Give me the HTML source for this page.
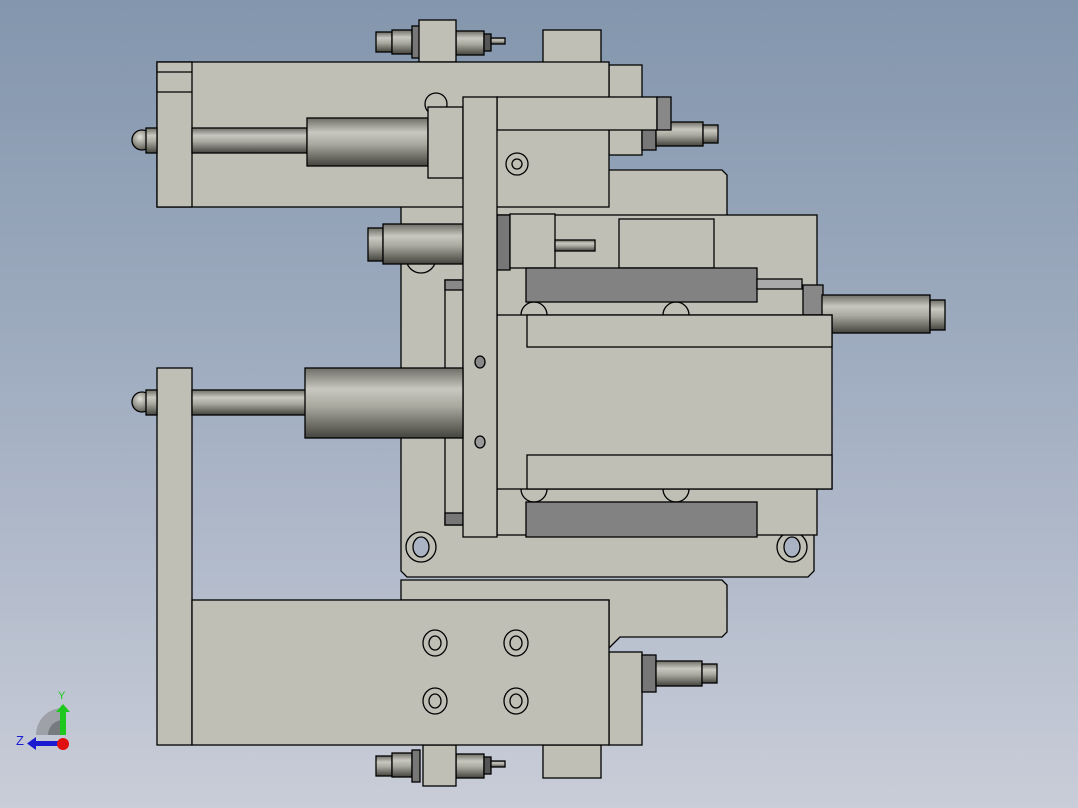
<!DOCTYPE html>
<html><head><meta charset="utf-8"><style>
html,body{margin:0;padding:0;width:1078px;height:808px;overflow:hidden}
body{background:linear-gradient(#8396ad,#a3afc2 50%,#c9cdd8)}
svg{position:absolute;left:0;top:0}
</style></head><body>
<svg width="1078" height="808" viewBox="0 0 1078 808">
<defs>
<linearGradient id="cyl" x1="0" y1="0" x2="0" y2="1">
<stop offset="0" stop-color="#6e6e66"/><stop offset="0.3" stop-color="#c8c8c0"/><stop offset="0.55" stop-color="#a8a89f"/><stop offset="1" stop-color="#44443e"/>
</linearGradient>
<radialGradient id="ball" cx="0.4" cy="0.35" r="0.7"><stop offset="0" stop-color="#e0e0d8"/><stop offset="1" stop-color="#55554e"/></radialGradient>
</defs>
<g stroke="#000" stroke-width="1.3" fill="#bfbfb6">
<!-- main plate -->
<path d="M401 170 H722 L727 175 V228 H808 L814 234 V571 L808 577 H407 L401 571 Z"/>
<path d="M401 580 H722 L727 585 V632 L722 637 H620 L609 648 V600 H401 Z"/>
<circle cx="421" cy="258" r="15" fill="none"/>
<circle cx="792" cy="254" r="15"/><circle cx="792" cy="254" r="8" fill="#a9b3c4"/>
<circle cx="421" cy="547" r="15"/><ellipse cx="421" cy="547" rx="8" ry="10" fill="#a9b3c4"/>
<circle cx="792" cy="547" r="15"/><ellipse cx="792" cy="547" rx="8" ry="10" fill="#a9b3c4"/>
<!-- top sensor -->
<rect x="376" y="32" width="16" height="20" fill="url(#cyl)"/>
<rect x="392" y="30" width="20" height="24" fill="url(#cyl)"/>
<rect x="412" y="26" width="8" height="32" fill="#777"/>
<rect x="456" y="31" width="28" height="24" fill="url(#cyl)"/>
<rect x="484" y="34" width="7" height="17" fill="#555"/>
<rect x="491" y="38" width="14" height="6" fill="url(#cyl)"/>
<rect x="419" y="20" width="37" height="42"/>
<rect x="543" y="30" width="58" height="33"/>
<!-- bottom sensor -->
<rect x="376" y="756" width="16" height="20" fill="url(#cyl)"/>
<rect x="392" y="753" width="20" height="24" fill="url(#cyl)"/>
<rect x="412" y="750" width="8" height="32" fill="#777"/>
<rect x="456" y="754" width="28" height="24" fill="url(#cyl)"/>
<rect x="484" y="757" width="7" height="17" fill="#555"/>
<rect x="491" y="761" width="14" height="6" fill="url(#cyl)"/>
<rect x="423" y="745" width="33" height="41"/>
<rect x="543" y="745" width="58" height="33"/>
<!-- upper body -->
<rect x="609" y="65" width="33" height="90"/>
<rect x="642" y="124" width="14" height="26" fill="#777"/>
<rect x="656" y="122" width="47" height="24" fill="url(#cyl)"/>
<rect x="703" y="125" width="15" height="18" fill="url(#cyl)"/>
<rect x="157" y="62" width="452" height="145"/>
<rect x="157" y="62" width="35" height="145"/>
<line x1="157" y1="72" x2="192" y2="72"/><line x1="157" y1="92" x2="192" y2="92"/>
<circle cx="436" cy="104" r="11" fill="none"/>
<rect x="192" y="128" width="115" height="25" fill="url(#cyl)"/>
<circle cx="142" cy="140" r="10" fill="url(#ball)"/>
<rect x="146" y="128" width="11" height="25" fill="url(#cyl)"/>
<rect x="307" y="118" width="121" height="48" fill="url(#cyl)"/>
<rect x="428" y="107" width="35" height="71"/>
<!-- middle left piston -->
<rect x="368" y="228" width="15" height="33" fill="url(#cyl)"/>
<rect x="383" y="224" width="80" height="40" fill="url(#cyl)"/>
<!-- strip -->
<rect x="445" y="280" width="18" height="245"/>
<rect x="445" y="280" width="18" height="10" fill="#888"/>
<rect x="445" y="513" width="18" height="12" fill="#777"/>
<!-- mid components -->
<rect x="497" y="215" width="320" height="320"/>
<rect x="497" y="215" width="13" height="55" fill="#777"/>
<rect x="510" y="214" width="45" height="54"/>
<rect x="555" y="240" width="40" height="11" fill="url(#cyl)"/>
<rect x="619" y="219" width="95" height="49"/>
<rect x="526" y="268" width="231" height="34" fill="#828282"/>
<rect x="526" y="502" width="231" height="35" fill="#828282"/>
<rect x="757" y="279" width="45" height="10" fill="#aaa"/>
<rect x="803" y="285" width="20" height="30" fill="#888"/>
<rect x="822" y="295" width="108" height="38" fill="url(#cyl)"/>
<rect x="930" y="300" width="15" height="30" fill="url(#cyl)"/>
<circle cx="534" cy="315" r="13" fill="none"/><circle cx="676" cy="315" r="13" fill="none"/>
<circle cx="534" cy="489" r="13" fill="none"/><circle cx="676" cy="489" r="13" fill="none"/>
<rect x="497" y="315" width="335" height="174"/>
<rect x="527" y="315" width="305" height="32"/>
<rect x="527" y="455" width="305" height="34"/>
<!-- vertical plate & arm -->
<rect x="497" y="97" width="160" height="33"/>
<rect x="657" y="97" width="14" height="33" fill="#888"/>
<circle cx="517" cy="164" r="11" fill="none"/><circle cx="517" cy="164" r="5" fill="none"/>
<rect x="463" y="97" width="34" height="440"/>
<ellipse cx="480" cy="362" rx="5" ry="6" fill="#888"/>
<ellipse cx="480" cy="442" rx="5" ry="6" fill="#999"/>
<!-- lower left cylinder -->
<rect x="157" y="368" width="35" height="377"/>
<rect x="192" y="390" width="115" height="25" fill="url(#cyl)"/>
<circle cx="142" cy="402" r="10" fill="url(#ball)"/>
<rect x="146" y="390" width="11" height="25" fill="url(#cyl)"/>
<rect x="305" y="368" width="158" height="70" fill="url(#cyl)"/>
<!-- lower body -->
<rect x="609" y="652" width="33" height="93"/>
<rect x="642" y="655" width="14" height="37" fill="#777"/>
<rect x="656" y="661" width="46" height="25" fill="url(#cyl)"/>
<rect x="702" y="664" width="15" height="19" fill="url(#cyl)"/>
<rect x="192" y="600" width="417" height="145"/>
<g fill="none"><ellipse cx="435" cy="643" rx="12" ry="13"/><ellipse cx="435" cy="643" rx="6" ry="7"/>
<ellipse cx="516" cy="643" rx="12" ry="13"/><ellipse cx="516" cy="643" rx="6" ry="7"/>
<ellipse cx="435" cy="701" rx="12" ry="13"/><ellipse cx="435" cy="701" rx="6" ry="7"/>
<ellipse cx="516" cy="701" rx="12" ry="13"/><ellipse cx="516" cy="701" rx="6" ry="7"/></g>
</g>
<!-- triad -->
<path d="M36 735 A27 27 0 0 1 63 708 V735 Z" fill="#9ea2a8"/>
<path d="M48 735 A15 15 0 0 1 63 720 V735 Z" fill="#777b80"/>
<rect x="60" y="710" width="6" height="25" fill="#1ec81e"/><path d="M56 712 L63 704 L70 712 Z" fill="#1ec81e"/>
<rect x="34" y="741" width="28" height="5" fill="#1a1ad0"/><path d="M36 737 L27 743.5 L36 750 Z" fill="#1a1ad0"/>
<circle cx="63" cy="744" r="6" fill="#e01010"/>
<text x="58" y="699" font-family="Liberation Sans,sans-serif" font-size="11" fill="#1ec81e">Y</text>
<text x="16" y="745" font-family="Liberation Sans,sans-serif" font-size="13" fill="#1a1ad0">Z</text>
</svg>
</body></html>
